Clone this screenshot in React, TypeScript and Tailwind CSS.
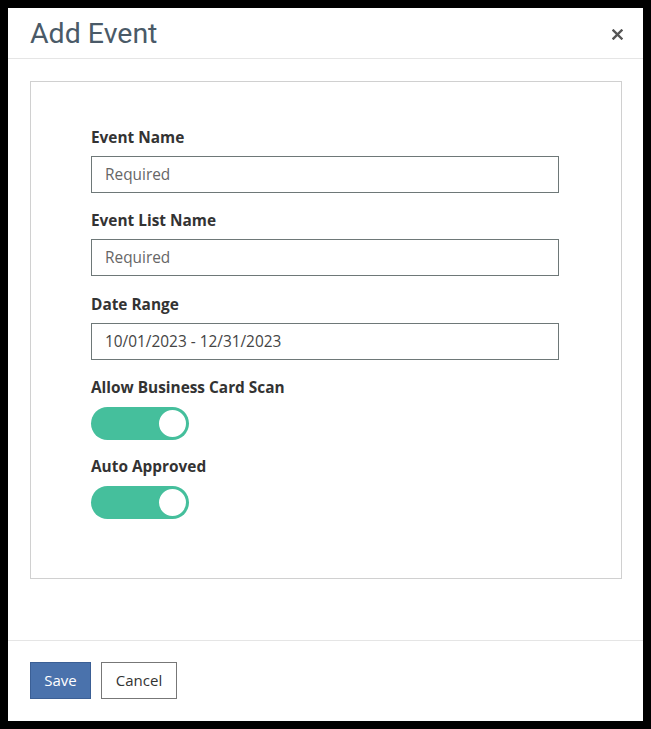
import React from "react";

function Toggle() {
  return (
    <div className="relative w-[98px] h-[33px] rounded-full bg-[#45bf9c]">
      <div className="absolute right-[1px] top-[1px] w-[31px] h-[31px] rounded-full bg-white border-[2px] border-[#45bf9c]" />
    </div>
  );
}

function Field({ label, value, color }: { label: string; value: string; color: string }) {
  return (
    <div>
      <div className="text-[15.4px] font-bold leading-[22px] text-[#333] mb-[7px]">{label}</div>
      <div className={`w-[468px] h-[37px] border border-[#6e7878] flex items-center pl-[13px] text-[15.4px] ${color}`}>{value}</div>
    </div>
  );
}

export default function App() {
  return (
    <div className="min-h-[729px] bg-black pt-[8px] pl-[8px]" style={{ fontFamily: '"Open Sans", sans-serif' }}>
      <div className="w-[635px] h-[713px] bg-white flex flex-col">
        <div className="h-[51px] border-b border-[#e5e5e5] flex items-center justify-between pl-[22px] pr-[20px] shrink-0">
          <div className="text-[28.5px] text-[#4a5a68] leading-none mt-[2px]" style={{ fontFamily: 'Roboto, sans-serif' }}>Add Event</div>
          <svg width="11" height="11" viewBox="0 0 11 11" className="mt-[2px]">
            <path d="M1.5 1.5 L9.5 9.5 M9.5 1.5 L1.5 9.5" stroke="#555" strokeWidth="2.4" strokeLinecap="square" />
          </svg>
        </div>
        <div className="px-[22px] pt-[22px] h-[582px] border-b border-[#e5e5e5] shrink-0">
          <div className="w-[592px] h-[498px] border border-[#d0d0d0] pl-[60px] pt-[45px]">
            <Field label="Event Name" value="Required" color="text-[#666]" />
            <div className="h-[17px]" />
            <Field label="Event List Name" value="Required" color="text-[#666]" />
            <div className="h-[18px]" />
            <Field label="Date Range" value="10/01/2023 - 12/31/2023" color="text-[#444]" />
            <div className="h-[17px]" />
            <div className="text-[15.4px] font-bold leading-[22px] text-[#333] mb-[8px]">Allow Business Card Scan</div>
            <Toggle />
            <div className="h-[16px]" />
            <div className="text-[15.4px] font-bold leading-[22px] text-[#333] mb-[8px]">Auto Approved</div>
            <Toggle />
          </div>
        </div>
        <div className="pl-[22px] pt-[21px] flex gap-[10px]">
          <button className="w-[61px] h-[37px] bg-[#4a72ac] border border-[#3b5f95] text-white text-[15px]">Save</button>
          <button className="w-[76px] h-[37px] bg-white border border-[#777] text-[#333] text-[15px]">Cancel</button>
        </div>
      </div>
    </div>
  );
}
